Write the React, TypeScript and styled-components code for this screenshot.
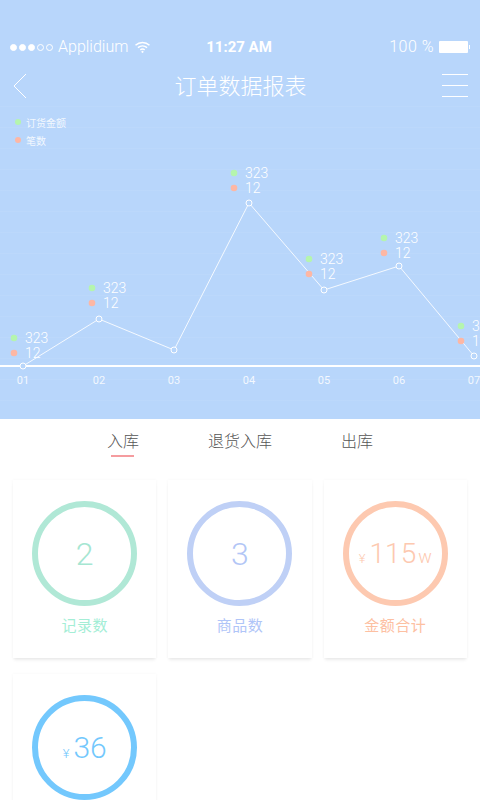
import React from 'react';
import styled, { createGlobalStyle } from 'styled-components';

const GlobalStyle = createGlobalStyle`
  html, body {
    margin: 0;
    padding: 0;
    background: #ffffff;
  }
  * {
    box-sizing: border-box;
  }
`;

const FONT = `Roboto, "Noto Sans CJK SC", sans-serif`;

// --- Page ---

const Page = styled.div`
  width: 480px;
  height: 800px;
  overflow: hidden;
  background: #ffffff;
  font-family: ${FONT};
`;

const Hero = styled.div`
  height: 419px;
  display: flex;
  flex-direction: column;
  color: #ffffff;
  background-color: #b8d6fb;
`;

// --- Status bar ---

const StatusBar = styled.div`
  height: 65px;
  padding: 37px 12px 0 10px;
  display: grid;
  grid-template-columns: 1fr auto 1fr;
  align-items: start;
  font-size: 16px;
  line-height: 20px;
  font-weight: 300;
`;

const StatusLeft = styled.div`
  display: flex;
  align-items: center;
  height: 20px;
`;

const Signal = styled.span<{ $on?: boolean }>`
  width: 7px;
  height: 7px;
  margin-right: 2px;
  border-radius: 50%;
  border: 1px solid #ffffff;
  background: ${(p) => (p.$on ? '#ffffff' : 'transparent')};
`;

const Carrier = styled.span`
  margin: 0 6px 0 3px;
`;

const Clock = styled.div`
  font-size: 15px;
  font-weight: 700;
`;

const StatusRight = styled.div`
  display: flex;
  align-items: center;
  justify-content: flex-end;
  height: 20px;
  gap: 5px;
  letter-spacing: 0.5px;
`;

const Battery = styled.span`
  width: 29px;
  height: 12px;
  background: #ffffff;
  border-radius: 1px;
  position: relative;

  &::after {
    content: '';
    position: absolute;
    right: -2px;
    top: 4px;
    width: 1px;
    height: 4px;
    background: #ffffff;
  }
`;

// --- Navigation ---

const NavBar = styled.div`
  height: 41px;
  padding: 0 12px 0 13px;
  display: grid;
  grid-template-columns: 26px 1fr 26px;
  align-items: center;
`;

const NavTitle = styled.div`
  margin-bottom: 3px;
  text-align: center;
  font-size: 22px;
  font-weight: 300;
`;

// --- Chart area with its faint rules ---

const ChartArea = styled.div`
  flex: 1;
  background-image: repeating-linear-gradient(
    to bottom,
    rgba(255, 255, 255, 0.05) 0,
    rgba(255, 255, 255, 0.05) 1px,
    transparent 1px,
    transparent 21px
  );
`;

const Legend = styled.div`
  height: 44px;
  padding: 8px 0 0 15px;
  display: flex;
  flex-direction: column;
  gap: 2px;
`;

const LegendItem = styled.div`
  display: flex;
  align-items: center;
  gap: 5px;
  height: 16px;
  font-size: 10px;
  color: rgba(255, 255, 255, 0.85);
`;

const Dot = styled.span<{ $color: string }>`
  width: 6px;
  height: 6px;
  border-radius: 50%;
  background: ${(p) => p.$color};
`;

const ChartSvg = styled.svg`
  display: block;
  width: 480px;
  height: 269px;
  font-family: ${FONT};
`;

// --- Tabs ---

const Tabs = styled.div`
  height: 61px;
  padding: 12px 0 0 107px;
  display: flex;
  gap: 69px;
`;

const Tab = styled.div<{ $active?: boolean }>`
  position: relative;
  height: 22px;
  font-size: 16px;
  line-height: 22px;
  font-weight: 300;
  color: #555555;

  &::after {
    content: '';
    display: ${(p) => (p.$active ? 'block' : 'none')};
    position: absolute;
    left: 4px;
    width: 23px;
    bottom: -4px;
    height: 2px;
    background: #f59c9f;
  }
`;

// --- Cards ---

const Grid = styled.div`
  padding: 0 13px;
  display: grid;
  grid-template-columns: repeat(3, 1fr);
  column-gap: 12px;
  row-gap: 16px;
`;

const Card = styled.div`
  height: 178px;
  padding-top: 21px;
  display: flex;
  flex-direction: column;
  align-items: center;
  background: #ffffff;
  box-shadow: 0 3px 3px -1px rgba(0, 0, 0, 0.08), 0 0 3px rgba(0, 0, 0, 0.04);
`;

const Ring = styled.div<{ $color: string }>`
  width: 105px;
  height: 105px;
  border-radius: 50%;
  border: 6px solid ${(p) => p.$color};
  display: flex;
  align-items: center;
  justify-content: center;
`;

const Value = styled.div<{ $color: string; $size: number }>`
  display: flex;
  align-items: baseline;
  color: ${(p) => p.$color};
  font-size: ${(p) => p.$size}px;
  line-height: 36px;
  font-weight: 300;
`;

const Currency = styled.span`
  margin-right: 4px;
  font-size: 13px;
  line-height: 1;
`;

const Unit = styled.span`
  margin-left: 2px;
  font-size: 18px;
  line-height: 1;
`;

const CardLabel = styled.div<{ $color: string }>`
  margin-top: 10px;
  font-size: 15px;
  line-height: 20px;
  letter-spacing: 0.5px;
  color: ${(p) => p.$color};
`;

// --- Data ---

const GREEN = '#b5f5ae';
const PEACH = '#fdb7a4';

const points = [
  { x: 23, y: 366, dx: 14, dy: 338, day: '01' },
  { x: 99, y: 319, dx: 92, dy: 288, day: '02' },
  { x: 174, y: 350, day: '03' },
  { x: 249, y: 203, dx: 234, dy: 173, day: '04' },
  { x: 324, y: 290, dx: 309, dy: 259, day: '05' },
  { x: 399, y: 266, dx: 384, dy: 238, day: '06' },
  { x: 474, y: 356, dx: 461, dy: 326, day: '07' },
];

const Chart = () => (
  <ChartSvg viewBox="0 150 480 269">
    <polyline
      points={points.map((p) => `${p.x},${p.y}`).join(' ')}
      fill="none"
      stroke="#ffffff"
      strokeOpacity="0.85"
      strokeWidth="1"
    />
    <rect x="0" y="365" width="480" height="2" fill="#ffffff" />
    {points.map((p) => (
      <g key={p.day}>
        <circle cx={p.x} cy={p.y} r="3" fill="#b8d6fb" stroke="#ffffff" strokeWidth="1" />
        <text x={p.x} y="384" fontSize="11" textAnchor="middle" fill="#ffffff" fillOpacity="0.85">
          {p.day}
        </text>
        {p.dx !== undefined && p.dy !== undefined && (
          <>
            <circle cx={p.dx} cy={p.dy} r="3.3" fill={GREEN} />
            <circle cx={p.dx} cy={p.dy + 15} r="3.3" fill={PEACH} />
            <text x={p.dx + 11} y={p.dy + 5} fontSize="14" fontWeight="300" fill="#ffffff">
              323
            </text>
            <text x={p.dx + 11} y={p.dy + 20} fontSize="14" fontWeight="300" fill="#ffffff">
              12
            </text>
          </>
        )}
      </g>
    ))}
  </ChartSvg>
);

const App = () => (
  <>
    <GlobalStyle />
    <Page>
      <Hero>
        <StatusBar>
          <StatusLeft>
            <Signal $on />
            <Signal $on />
            <Signal $on />
            <Signal />
            <Signal />
            <Carrier>Applidium</Carrier>
            <svg width="17" height="12" viewBox="0 0 16 12" fill="none" stroke="#fff" strokeWidth="1.5">
              <path d="M1 4.2C5 .6 11 .6 15 4.2" />
              <path d="M3.4 6.6c2.7-2.3 6.5-2.3 9.2 0" />
              <path d="M5.8 8.8c1.3-1 3.1-1 4.4 0" />
              <circle cx="8" cy="10.8" r="1.1" fill="#fff" stroke="none" />
            </svg>
          </StatusLeft>
          <Clock>11:27 AM</Clock>
          <StatusRight>
            <span>100 %</span>
            <Battery />
          </StatusRight>
        </StatusBar>
        <NavBar>
          <svg width="14" height="26" viewBox="0 0 14 26" fill="none" stroke="#fff" strokeWidth="1">
            <path d="M13 1 1 13l12 12" />
          </svg>
          <NavTitle>订单数据报表</NavTitle>
          <svg width="26" height="24" viewBox="0 0 26 24" stroke="#fff" strokeWidth="1">
            <path d="M0 .5h26M0 11.5h26M0 22.5h26" />
          </svg>
        </NavBar>
        <ChartArea>
          <Legend>
            <LegendItem>
              <Dot $color={GREEN} />
              订货金额
            </LegendItem>
            <LegendItem>
              <Dot $color={PEACH} />
              笔数
            </LegendItem>
          </Legend>
          <Chart />
        </ChartArea>
      </Hero>
      <Tabs>
        <Tab $active>入库</Tab>
        <Tab>退货入库</Tab>
        <Tab>出库</Tab>
      </Tabs>
      <Grid>
        <Card>
          <Ring $color="#b0e8d6">
            <Value $color="#a6e6d2" $size={32}>2</Value>
          </Ring>
          <CardLabel $color="#a4eed6">记录数</CardLabel>
        </Card>
        <Card>
          <Ring $color="#bfd0f6">
            <Value $color="#b2c6f6" $size={32}>3</Value>
          </Ring>
          <CardLabel $color="#b0c5f8">商品数</CardLabel>
        </Card>
        <Card>
          <Ring $color="#fdc9b0">
            <Value $color="#fdc9b0" $size={28}>
              <Currency>¥</Currency>
              115
              <Unit>w</Unit>
            </Value>
          </Ring>
          <CardLabel $color="#fdc0a2">金额合计</CardLabel>
        </Card>
        <Card>
          <Ring $color="#73c8fd">
            <Value $color="#73c8fd" $size={30}>
              <Currency>¥</Currency>
              36
            </Value>
          </Ring>
        </Card>
      </Grid>
    </Page>
  </>
);

export default App;
